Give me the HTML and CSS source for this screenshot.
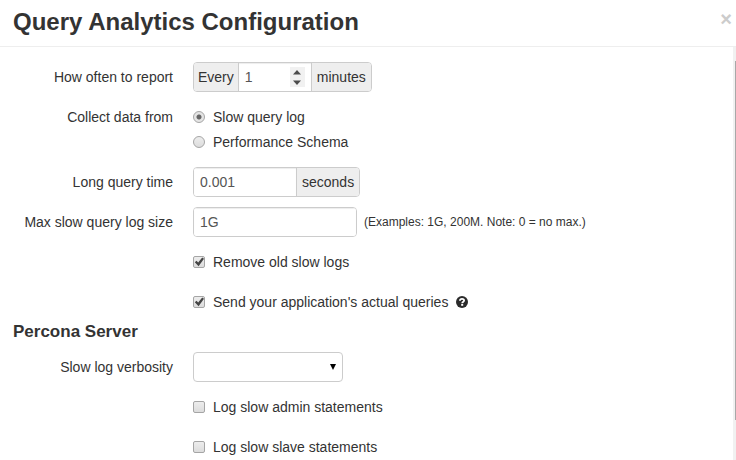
FILE: index.html
```html
<!DOCTYPE html>
<html lang="en">
<head>
<meta charset="utf-8">
<title>Query Analytics Configuration</title>
<link rel="stylesheet" href="styles.css">
</head>
<body>
<header class="header">
  <h1 class="title">Query Analytics Configuration</h1>
  <button class="close" type="button" aria-label="Close">×</button>
</header>
<div class="main">
  <form class="form">
    <section class="section">
      <div class="row">
        <label class="label" for="interval">How often to report</label>
        <div class="group">
          <span class="addon">Every</span>
          <span class="number">
            <input class="input input-number" id="interval" type="text" inputmode="numeric" value="1">
            <span class="spinner">
              <button class="step" type="button" aria-label="Increase"><svg width="8" height="5" viewBox="0 0 8 5"><path d="M0 4.5 4 0l4 4.5z"/></svg></button>
              <button class="step" type="button" aria-label="Decrease"><svg width="8" height="5" viewBox="0 0 8 5"><path d="M0 .5h8L4 5z"/></svg></button>
            </span>
          </span>
          <span class="addon addon-end">minutes</span>
        </div>
      </div>
      <div class="row row-choices" role="radiogroup" aria-labelledby="source">
        <span class="label" id="source">Collect data from</span>
        <div class="choices">
          <label class="choice"><input class="radio" type="radio" name="source" checked>Slow query log</label>
          <label class="choice"><input class="radio" type="radio" name="source">Performance Schema</label>
        </div>
      </div>
      <div class="row">
        <label class="label" for="long-time">Long query time</label>
        <div class="group">
          <input class="input input-time" id="long-time" type="text" value="0.001">
          <span class="addon addon-end">seconds</span>
        </div>
      </div>
      <div class="row">
        <label class="label" for="max-size">Max slow query log size</label>
        <div class="group"><input class="input input-size" id="max-size" type="text" value="1G"></div>
        <span class="hint">(Examples: 1G, 200M. Note: 0 = no max.)</span>
      </div>
      <div class="row row-check">
        <label class="choice"><input class="check" type="checkbox" checked>Remove old slow logs</label>
      </div>
      <div class="row row-check">
        <label class="choice"><input class="check" type="checkbox" checked>Send your application's actual queries</label>
        <svg class="help" viewBox="0 0 12 12" role="img" aria-label="Help"><circle cx="6" cy="6" r="6" fill="#2b2b2b"/><path d="M3.900 4.700C4 3.200 4.900 2.800 6 2.800s2.100.6 2.100 1.700C8.100 5.700 6.200 5.600 6.200 7.200" fill="none" stroke="#fff" stroke-width="1.800"/><path d="M5.200 8h2v1.800h-2z" fill="#fff"/></svg>
      </div>
    </section>
    <section class="section">
      <h2 class="subtitle">Percona Server</h2>
      <div class="row">
        <label class="label" for="verbosity">Slow log verbosity</label>
        <div class="select-wrap">
          <select class="select" id="verbosity"><option></option></select>
          <svg class="arrow" width="6" height="6" viewBox="0 0 6 6"><path d="M0 0h6L3 6z"/></svg>
        </div>
      </div>
      <div class="row row-check">
        <label class="choice"><input class="check" type="checkbox">Log slow admin statements</label>
      </div>
      <div class="row row-check">
        <label class="choice"><input class="check" type="checkbox">Log slow slave statements</label>
      </div>
    </section>
  </form>
  <div class="track"><div class="thumb"></div></div>
</div>
</body>
</html>
```
FILE: styles.css
```css
* { box-sizing: border-box; }

body {
  display: flex;
  flex-direction: column;
  height: 100vh;
  margin: 0;
  overflow: hidden;
  background: #fff;
  color: #333;
  font: 14px/20px "Liberation Sans", Arial, sans-serif;
}

button, input, select { font: inherit; }

.header {
  display: flex;
  flex: none;
  justify-content: space-between;
  align-items: flex-start;
  padding: 2px 4px 4px 13px;
  border-bottom: 1px solid #eee;
}

.title {
  margin: 0;
  font-size: 24px;
  line-height: 40px;
}

.close {
  padding: 7px 0 0;
  border: 0;
  background: none;
  color: #ccc;
  font-size: 20px;
  font-weight: bold;
  line-height: 20px;
}

.main {
  display: flex;
  flex: 1;
  min-height: 0;
}

.form {
  flex: 1;
  padding: 15px 13px;
  overflow: hidden;
}

.row {
  display: flex;
  align-items: center;
  min-height: 30px;
}

.row + .row { margin-top: 10px; }

.row-choices {
  align-items: flex-start;
  padding: 5px 0;
}

.row-check { padding-left: 180px; }

.label {
  flex: none;
  width: 160px;
  margin-right: 20px;
  text-align: right;
}

.choices {
  display: grid;
  gap: 5px;
}

.choice {
  display: flex;
  align-items: center;
  gap: 8px;
}

.group {
  display: flex;
  border: 1px solid #ccc;
  border-radius: 4px;
  overflow: hidden;
}

.addon {
  padding: 4px;
  background: #eee;
}

.addon-end { padding: 4px 5px; }

.input {
  height: 28px;
  padding: 4px 6px;
  border: 0;
  background: #fff;
  box-shadow: inset 0 1px 1px rgba(0, 0, 0, .075);
  color: #555;
}

.input-number { width: 72px; }
.input-time { width: 102px; }
.input-size { width: 162px; }

.input-time + .addon { border-left: 1px solid #ccc; }

.number {
  position: relative;
  border: solid #ccc;
  border-width: 0 1px;
}

.spinner {
  position: absolute;
  top: 4px;
  right: 6px;
  display: grid;
  width: 15px;
  height: 20px;
  background: #f1f1f1;
}

.step {
  display: flex;
  align-items: center;
  justify-content: center;
  padding: 0;
  border: 0;
  background: none;
  fill: #4c4c4c;
}

.hint {
  margin-left: 7px;
  font-size: 12px;
}

.radio, .check {
  appearance: none;
  flex: none;
  width: 12px;
  height: 12px;
  margin: 0;
  border: 1px solid #a5a5a5;
  border-radius: 2px;
  background: linear-gradient(#ededed, #dcdcdc);
}

.radio { border-radius: 50%; }

.radio:checked {
  background: radial-gradient(circle, #666 0 2px, #e4e4e4 3px);
}

.check:checked { position: relative; }

.check:checked::after {
  content: "";
  position: absolute;
  inset: 0;
  background: #444;
  clip-path: polygon(8% 52%, 25% 38%, 42% 56%, 82% 4%, 100% 18%, 46% 92%);
}

.help {
  width: 12px;
  height: 12px;
  margin-left: 8px;
}

.subtitle {
  margin: 0 0 5px;
  font-size: 17px;
  line-height: 30px;
}

.select-wrap { position: relative; }

.select {
  appearance: none;
  display: block;
  width: 150px;
  height: 30px;
  padding: 4px 6px;
  border: 1px solid #ccc;
  border-radius: 4px;
  background: #fff;
  color: #555;
}

.arrow {
  position: absolute;
  top: 12px;
  right: 7px;
  pointer-events: none;
}

.track {
  width: 3px;
  padding: 14px 0 0 2px;
  background: #f1f1f1;
}

.thumb {
  height: 90%;
  background: #a8a8a8;
}
```
